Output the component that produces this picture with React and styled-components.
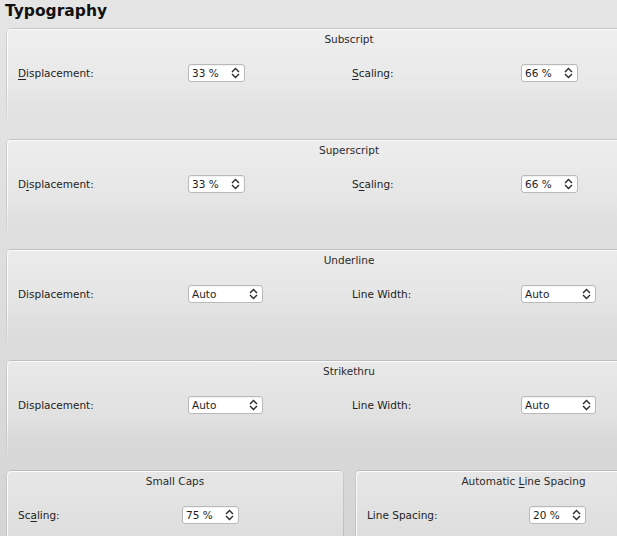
import React from 'react';
import styled, { createGlobalStyle } from 'styled-components';

const GlobalStyle = createGlobalStyle`
    html, body {
        margin: 0;
        padding: 0;
        height: 100%;
        overflow: hidden;
        background: linear-gradient(to bottom, #e5e5e5 0%, #dedede 50%, #d5d5d5 100%);
    }
    body {
        font-family: "DejaVu Sans", "Liberation Sans", sans-serif;
        font-size: 10.5px;
        color: #232323;
    }
`;

const Page = styled.div`
    width: 700px;
    padding-left: 6px;
`;

const Heading = styled.h1`
    margin: 0 0 7px -1px;
    padding-top: 1px;
    font-size: 15.5px;
    line-height: 20px;
    font-weight: bold;
    color: #111;
`;

const Stack = styled.div`
    display: flex;
    flex-direction: column;
    gap: 10.6px;
`;

const BottomRow = styled.div`
    display: flex;
    gap: 11px;
`;

const GroupBox = styled.section`
    position: relative;
    isolation: isolate;
    box-sizing: border-box;
    width: ${p => p.$width || 686}px;
    height: ${p => p.$height || 100}px;
    padding: 5px 0 0 12px;
    flex-shrink: 0;

    &::before {
        content: '';
        position: absolute;
        inset: 0;
        z-index: -1;
        border: 1px solid rgba(0, 0, 0, 0.13);
        border-bottom: none;
        border-radius: 5px 5px 0 0;
        box-shadow: inset 1px 1px 0 #fbfbfb;
        background: linear-gradient(to bottom, rgba(255, 255, 255, 0.4) 0%, rgba(255, 255, 255, 0.2) 60%, rgba(255, 255, 255, 0) 100%);
        -webkit-mask-image: linear-gradient(to bottom, #000 60%, transparent 100%);
        mask-image: linear-gradient(to bottom, #000 60%, transparent 100%);
    }
`;

const GroupTitle = styled.div`
    margin-left: -12px;
    text-align: center;
    line-height: 13px;
    color: #2a2a2a;
`;

const FieldRow = styled.div`
    display: grid;
    grid-template-columns: ${p => p.$columns};
    align-items: center;
    margin-top: 18px;
    height: 18px;
`;

const Label = styled.span`
    white-space: nowrap;
`;

const Key = styled.span`
    text-decoration: underline;
    text-underline-offset: 2px;
`;

const Spin = styled.div`
    box-sizing: border-box;
    display: inline-flex;
    align-items: center;
    justify-content: space-between;
    width: ${p => p.$width || 57}px;
    height: 18px;
    padding: 0 4px 0 3px;
    background: #fff;
    border: 1px solid #b9b9b9;
    border-radius: 3px;
    box-shadow: inset 0 1px 1px rgba(0, 0, 0, 0.06);
    color: #1e1e1e;
`;

const Arrows = () => (
    <svg width="9" height="12" viewBox="0 0 9 12">
        <polyline points="1,5 4.5,1.5 8,5" fill="none" stroke="#2b2b2b" strokeWidth="1.4" />
        <polyline points="1,7 4.5,10.5 8,7" fill="none" stroke="#2b2b2b" strokeWidth="1.4" />
    </svg>
);

const SpinBox = ({ value, width }) => (
    <Spin $width={width}>
        <span>{value}</span>
        <Arrows />
    </Spin>
);

const wideCols = '170px 164px 169px auto';

const groups = [
    {
        title: 'Subscript',
        left: <><Key>D</Key>isplacement:</>,
        right: <><Key>S</Key>caling:</>,
        leftValue: '33 %',
        rightValue: '66 %',
    },
    {
        title: 'Superscript',
        left: <>D<Key>i</Key>splacement:</>,
        right: <>S<Key>c</Key>aling:</>,
        leftValue: '33 %',
        rightValue: '66 %',
    },
    {
        title: 'Underline',
        left: 'Displacement:',
        right: 'Line Width:',
        leftValue: 'Auto',
        rightValue: 'Auto',
        width: 75,
    },
    {
        title: 'Strikethru',
        left: 'Displacement:',
        right: 'Line Width:',
        leftValue: 'Auto',
        rightValue: 'Auto',
        width: 75,
    },
];

export default function App() {
    return (
        <Page>
            <GlobalStyle />
            <Heading>Typography</Heading>
            <Stack>
                {groups.map(g => (
                    <GroupBox key={g.title}>
                        <GroupTitle>{g.title}</GroupTitle>
                        <FieldRow $columns={wideCols}>
                            <Label>{g.left}</Label>
                            <div><SpinBox value={g.leftValue} width={g.width} /></div>
                            <Label>{g.right}</Label>
                            <div><SpinBox value={g.rightValue} width={g.width} /></div>
                        </FieldRow>
                    </GroupBox>
                ))}
                <BottomRow>
                    <GroupBox $width={338} $height={120}>
                        <GroupTitle>Small Caps</GroupTitle>
                        <FieldRow $columns="164px auto">
                            <Label>Sc<Key>a</Key>ling:</Label>
                            <div><SpinBox value="75 %" /></div>
                        </FieldRow>
                    </GroupBox>
                    <GroupBox $width={337} $height={120}>
                        <GroupTitle>Automatic <Key>L</Key>ine Spacing</GroupTitle>
                        <FieldRow $columns="162px auto">
                            <Label>Line Spacing:</Label>
                            <div><SpinBox value="20 %" /></div>
                        </FieldRow>
                    </GroupBox>
                </BottomRow>
            </Stack>
        </Page>
    );
}
